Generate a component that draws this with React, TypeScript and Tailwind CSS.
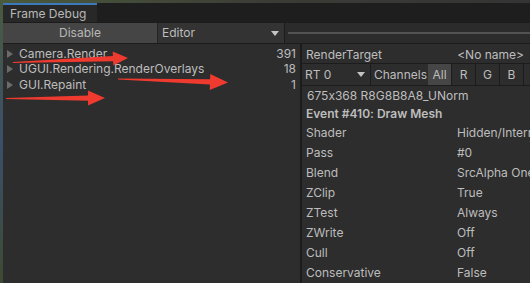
import React from "react";

type Arrow = { x1: number; y1: number; x2: number; y2: number; head: number; hw: number };

const arrows: Arrow[] = [
  { x1: 13, y1: 62.5, x2: 128, y2: 58, head: 15, hw: 14 },
  { x1: 118, y1: 79, x2: 228, y2: 82.5, head: 18, hw: 16 },
  { x1: 6, y1: 98.5, x2: 105, y2: 98, head: 17, hw: 15 },
];

function arrowPoints(a: Arrow) {
  const dx = a.x2 - a.x1;
  const dy = a.y2 - a.y1;
  const len = Math.hypot(dx, dy);
  const ux = dx / len;
  const uy = dy / len;
  const nx = -uy;
  const ny = ux;
  const bx = a.x2 - ux * a.head;
  const by = a.y2 - uy * a.head;
  const tail = 0.6;
  const shaft = 2.6;
  const pts = [
    [a.x1 + nx * tail, a.y1 + ny * tail],
    [bx + nx * shaft, by + ny * shaft],
    [bx + nx * (a.hw / 2), by + ny * (a.hw / 2)],
    [a.x2, a.y2],
    [bx - nx * (a.hw / 2), by - ny * (a.hw / 2)],
    [bx - nx * shaft, by - ny * shaft],
    [a.x1 - nx * tail, a.y1 - ny * tail],
  ];
  return pts.map((p) => p.join(",")).join(" ");
}

const events = [
  { name: "Camera.Render", count: "391" },
  { name: "UGUI.Rendering.RenderOverlays", count: "18" },
  { name: "GUI.Repaint", count: "1" },
];

const props = [
  ["Shader", "Hidden/Internal-GUITexture"],
  ["Pass", "#0"],
  ["Blend", "SrcAlpha OneMinusSrcAlpha"],
  ["ZClip", "True"],
  ["ZTest", "Always"],
  ["ZWrite", "Off"],
  ["Cull", "Off"],
  ["Conservative", "False"],
];

function Triangle() {
  return (
    <svg width="6" height="8" viewBox="0 0 6 8" className="shrink-0">
      <path d="M0 0 L6 4 L0 8 Z" fill="#6b6b6b" />
    </svg>
  );
}

function DownArrow() {
  return (
    <svg width="8" height="5" viewBox="0 0 8 5">
      <path d="M0 0 L8 0 L4 5 Z" fill="#c4c4c4" />
    </svg>
  );
}

export default function App() {
  return (
    <div className="relative w-[530px] h-[283px] flex overflow-hidden bg-[#2d2d2d] text-[12px] text-[#bdbdbd] font-['Inter',sans-serif] [font-feature-settings:'calt'_0]">
      {/* sliver of the scene behind the window */}
      <div className="w-[3px] shrink-0 bg-gradient-to-b from-[#4b5a3c] via-[#3b4f6a] to-[#3d4a31]" />

      <div className="flex-1 flex flex-col min-w-0">
        <div className="h-[3px] bg-gradient-to-r from-[#4a5a3c] via-[#3c3c36] to-[#343434]" />

        {/* tab strip */}
        <div className="h-[19px] flex bg-[#1e1e1e]">
          <div className="w-[94px] bg-[#282828] border-t-2 border-[#3a79bb] flex items-center pl-[7px] pt-[1px] text-[#b8b8b8]">
            Frame Debug
          </div>
        </div>

        {/* toolbar */}
        <div className="h-[22px] flex bg-[#2b2b2b] border-y border-[#1c1c1c]">
          <div className="w-[155px] bg-[#454545] border-r border-[#242424] flex items-center justify-center text-[#b8b8b8]">
            Disable
          </div>
          <div className="w-[127px] bg-[#333333] border-r border-[#1c1c1c] flex items-center justify-between pl-[4px] pr-[5px]">
            <span>Editor</span>
            <DownArrow />
          </div>
          <div className="flex-1 flex items-center pl-[3px]">
            <div className="h-[2px] w-full bg-[#525252]" />
          </div>
        </div>

        <div className="flex-1 flex min-h-0">
          {/* event tree */}
          <div className="w-[299px] shrink-0 flex flex-col pt-[2px] border-r-2 border-[#1c1c1c]">
            {events.map((e) => (
              <div key={e.name} className="h-[15.5px] flex items-center pl-[4px] pr-[4px] gap-[6px]">
                <Triangle />
                <span className="flex-1 truncate">{e.name}</span>
                <span>{e.count}</span>
              </div>
            ))}
          </div>

          {/* details */}
          <div className="flex-1 min-w-0 flex flex-col">
            <div className="h-[20px] flex items-center justify-between pl-[4px] pr-[6px] pt-[2px] border-b border-[#1c1c1c]">
              <span>RenderTarget</span>
              <span>&lt;No name&gt;</span>
            </div>
            <div className="h-[22px] flex border-b border-[#1c1c1c]">
              <div className="w-[69px] flex items-center justify-between pl-[3px] pr-[5px] border-r border-[#1c1c1c]">
                <span>RT 0</span>
                <DownArrow />
              </div>
              <div className="w-[57px] flex items-center pl-[3px]">Channels</div>
              <div className="w-[24px] flex items-center justify-center bg-[#464646] border-r border-[#1c1c1c]">All</div>
              <div className="w-[24px] flex items-center justify-center border-r border-[#1c1c1c]">R</div>
              <div className="w-[24px] flex items-center justify-center border-r border-[#1c1c1c]">G</div>
              <div className="w-[24px] flex items-center justify-center border-r border-[#1c1c1c]">B</div>
            </div>
            <div className="h-[19px] flex items-center pl-[5px]">675x368 R8G8B8A8_UNorm</div>
            <div className="h-[18px] flex items-center pl-[4px] font-semibold">Event #410: Draw Mesh</div>
            {props.map(([k, v]) => (
              <div key={k} className="h-[20px] shrink-0 flex items-center pl-[4px] whitespace-nowrap">
                <span className="w-[151px] shrink-0">{k}</span>
                <span className="overflow-hidden">{v}</span>
              </div>
            ))}
          </div>
        </div>
      </div>

      {/* red annotation arrows */}
      <svg className="absolute inset-0 pointer-events-none" width="530" height="283">
        {arrows.map((a, i) => (
          <polygon key={i} points={arrowPoints(a)} fill="#ee3a2f" />
        ))}
      </svg>
    </div>
  );
}
